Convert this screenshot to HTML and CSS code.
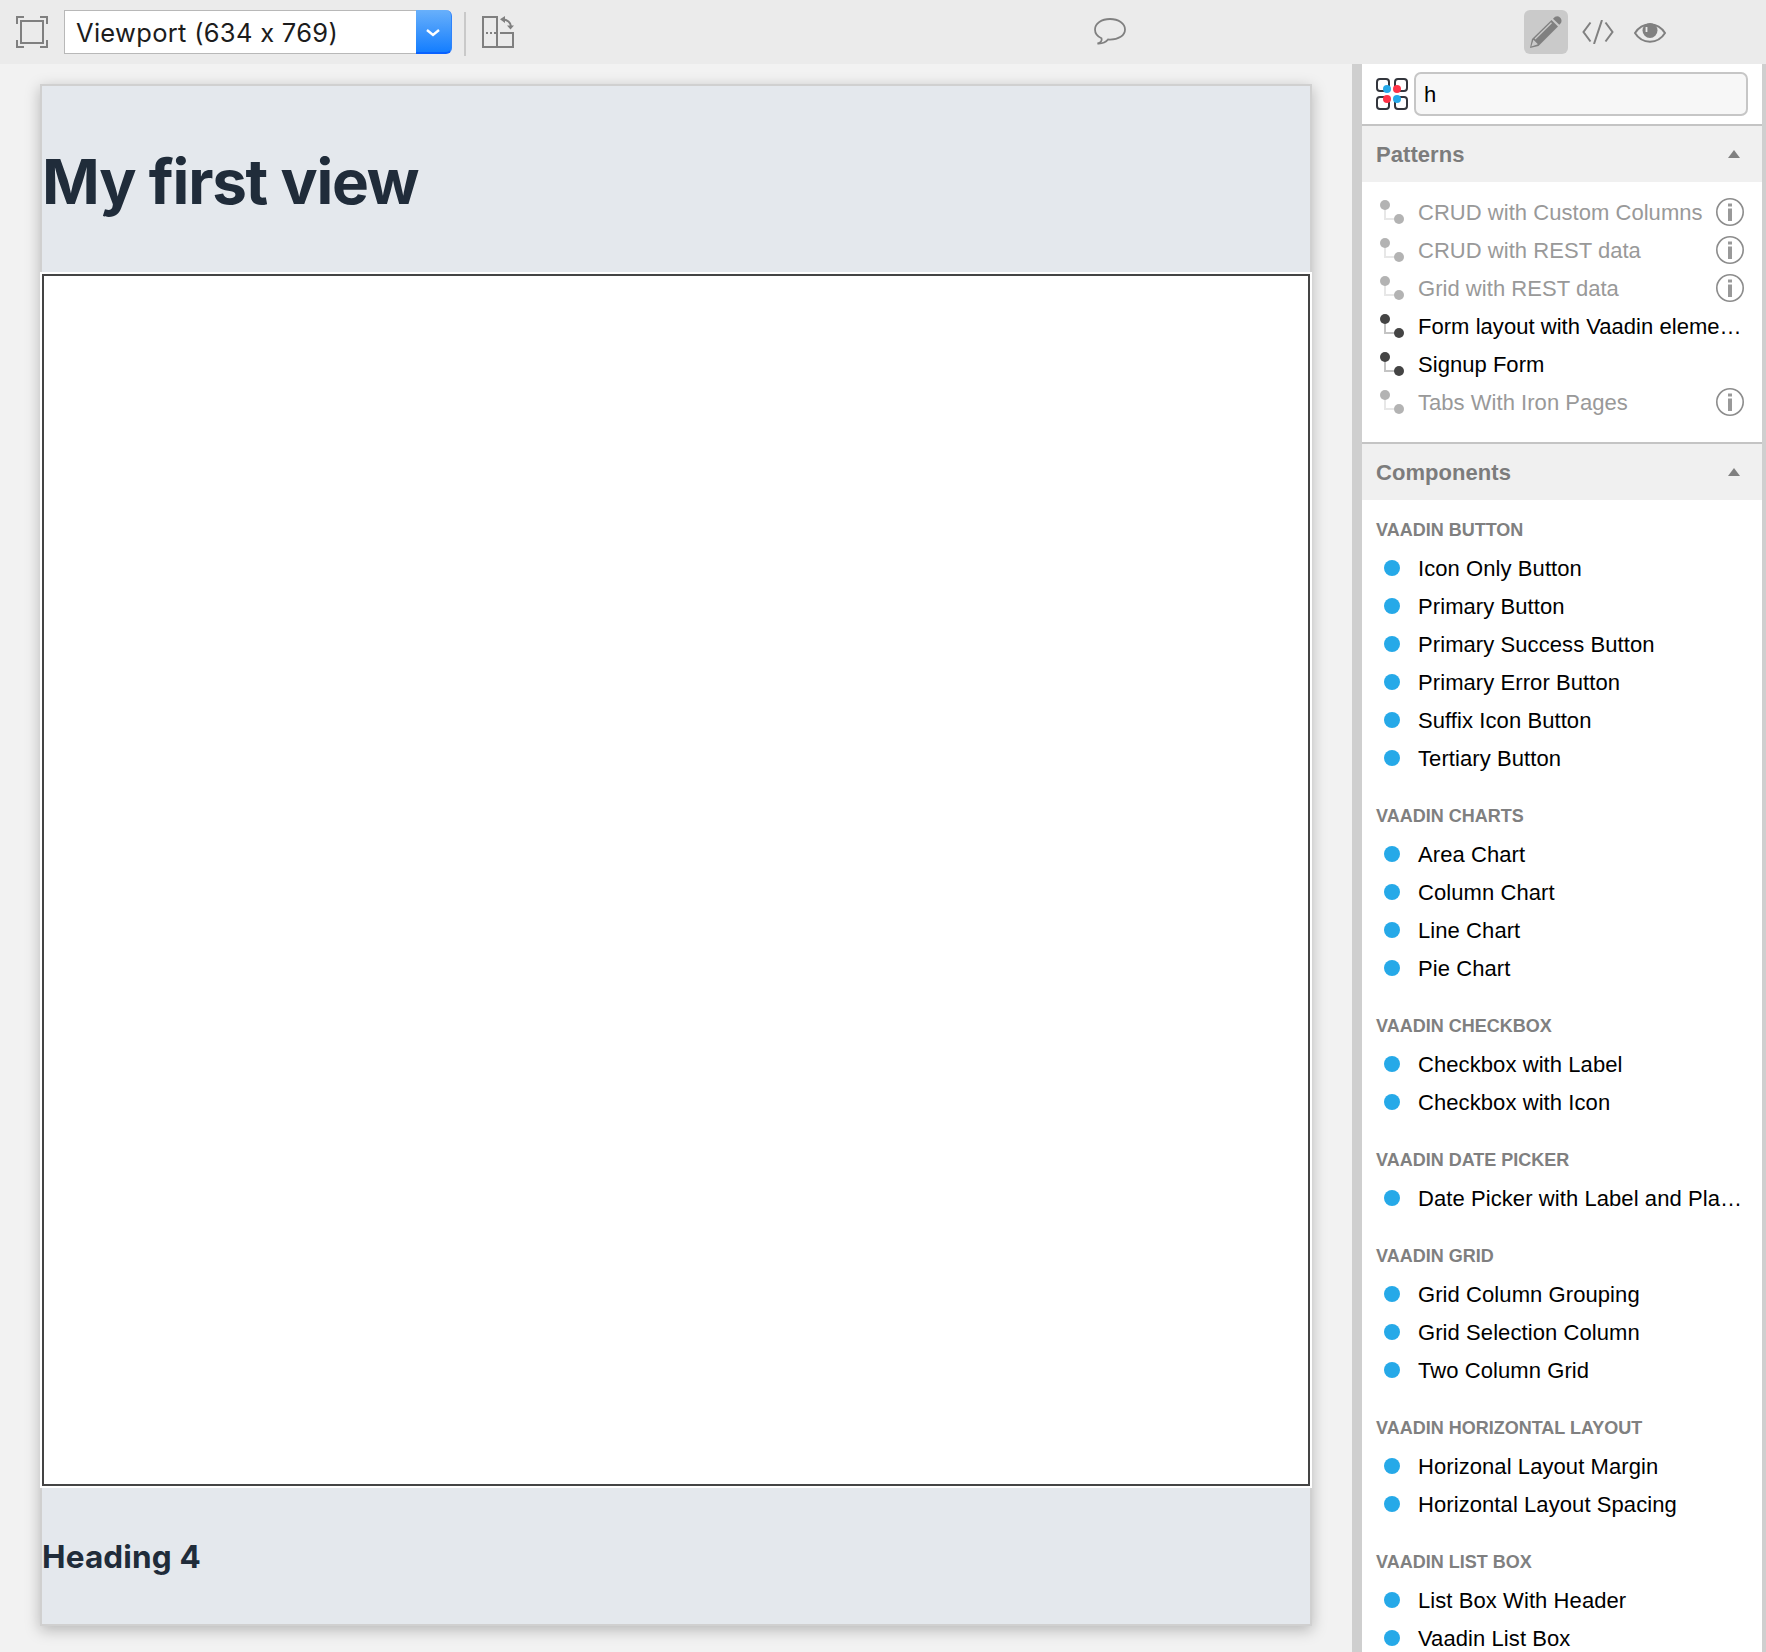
FILE: index.html
```html
<!DOCTYPE html>
<html lang="en">
<head>
<meta charset="utf-8">
<title>Designer</title>
<link rel="stylesheet" href="styles.css">
</head>
<body>
<svg class="defs" width="0" height="0">
  <symbol id="tree" viewBox="0 0 24 24"><path d="M5 6v13h13" fill="none" stroke="#c4c4c4" stroke-width="2"/><circle cx="5" cy="5" r="5" fill="#444"/><circle cx="19" cy="19" r="5" fill="#444"/></symbol>
  <symbol id="info" viewBox="0 0 28 28"><circle cx="14" cy="14" r="13.2" fill="none" stroke="#8c8c8c" stroke-width="1.6"/><path d="M12 5.5h4v3h-4zM12 10.5h4v12.5h-4z" fill="#999"/></symbol>
</svg>
<header class="toolbar">
  <svg class="icon-fit" width="32" height="32" viewBox="0 0 32 32" fill="none" stroke="#808080" stroke-width="2"><path d="M5 5h22v22H5zM1 8V1h7M24 1h7v7M31 24v7h-7M8 31H1v-7"/></svg>
  <div class="select">
    <span class="select-value">Viewport (634 x 769)</span>
    <span class="select-button"><svg width="16" height="10" viewBox="0 0 16 10" fill="none" stroke="#fff" stroke-width="2.4"><path d="M2 2l6 5 6-5"/></svg></span>
  </div>
  <span class="divider"></span>
  <svg class="icon-rotate" width="32" height="32" viewBox="0 0 32 32" fill="none" stroke="#808080" stroke-width="2"><path d="M1 1h14v30H1zM18 17h13v14H15"/><path d="M4 17h2M8 17h2M12 17h2"/><path d="M21 3.5c4 0 8 3 8 7"/><path d="M23 0v7l-5-3.800zM25 9.500h7l-3.500 4z" fill="#808080" stroke="none"/></svg>
  <svg class="icon-comment" width="32" height="28" viewBox="0 0 32 28" fill="none" stroke="#808080" stroke-width="1.8"><path d="M16 1C7.500 1 1 5.500 1 11.500c0 4 2.500 7 6.500 8.800.8 2.500-.7 4.200-4 5.200 4.500.3 8-.8 10.500-4l2 .1c8.500 0 15-4.100 15-10.100S24.500 1 16 1z"/></svg>
  <div class="modes">
    <span class="mode active"><svg width="34" height="34" viewBox="0 0 34 34"><path d="M1 33l2-9L22.500 5l6.500 6.500L9.500 31z" fill="#808080"/><path d="M24 3.800C26.500.5 29 .6 31 2.400c2.100 2 2.200 4.800-.7 7.300z" fill="#808080"/><path d="M6 24L22.500 7.800M3.300 30.500L4.700 26l3 3z" stroke="#cacaca" stroke-width="1.300" fill="#cacaca"/></svg></span>
    <svg width="32" height="24" viewBox="0 0 32 24" fill="none" stroke="#808080" stroke-width="2"><path d="M8.500 2.500L1.500 12l7 9.500M23.500 2.500l7 9.500-7 9.500M20 0l-8 24"/></svg>
    <svg class="icon-eye" width="32" height="20" viewBox="0 0 32 20"><path d="M1 10C8-1.500 24-1.500 31 10 24 21.500 8 21.500 1 10z" fill="none" stroke="#808080" stroke-width="2"/><circle cx="16" cy="7.500" r="7.500" fill="#808080"/><path d="M12.500 4v5" stroke="#ebebeb" stroke-width="1.800"/></svg>
  </div>
</header>
<div class="workspace">
  <main class="canvas">
    <div class="artboard">
      <div class="board-head"><h1>My first view</h1></div>
      <div class="content"></div>
      <div class="board-foot"><h4>Heading 4</h4></div>
    </div>
  </main>
  <aside class="panel">
    <div class="search">
      <svg width="32" height="32" viewBox="0 0 32 32"><g fill="none" stroke="#33363d" stroke-width="2"><rect x="1" y="1" width="12" height="12" rx="3"/><rect x="19" y="1" width="12" height="12" rx="3"/><rect x="1" y="19" width="12" height="12" rx="3"/><rect x="19" y="19" width="12" height="12" rx="3"/></g><g fill="#26a9e8"><circle cx="11" cy="11" r="4"/><circle cx="21" cy="21" r="4"/></g><g fill="#ff3347"><circle cx="21" cy="11" r="4"/><circle cx="11" cy="21" r="4"/></g></svg>
      <div class="field">h</div>
    </div>
    <h2 class="section"><span class="title">Patterns</span><span class="arrow"></span></h2>
    <ul class="patterns">
      <li class="off"><svg class="tree"><use href="#tree"/></svg><span class="label">CRUD with Custom Columns</span><svg class="info"><use href="#info"/></svg></li>
      <li class="off"><svg class="tree"><use href="#tree"/></svg><span class="label">CRUD with REST data</span><svg class="info"><use href="#info"/></svg></li>
      <li class="off"><svg class="tree"><use href="#tree"/></svg><span class="label">Grid with REST data</span><svg class="info"><use href="#info"/></svg></li>
      <li><svg class="tree"><use href="#tree"/></svg><span class="label">Form layout with Vaadin eleme…</span></li>
      <li><svg class="tree"><use href="#tree"/></svg><span class="label">Signup Form</span></li>
      <li class="off"><svg class="tree"><use href="#tree"/></svg><span class="label">Tabs With Iron Pages</span><svg class="info"><use href="#info"/></svg></li>
    </ul>
    <h2 class="section"><span class="title">Components</span><span class="arrow"></span></h2>
    <section class="group"><h3>VAADIN BUTTON</h3><ul><li><span>Icon Only Button</span></li><li><span>Primary Button</span></li><li><span>Primary Success Button</span></li><li><span>Primary Error Button</span></li><li><span>Suffix Icon Button</span></li><li><span>Tertiary Button</span></li></ul></section>
    <section class="group"><h3>VAADIN CHARTS</h3><ul><li><span>Area Chart</span></li><li><span>Column Chart</span></li><li><span>Line Chart</span></li><li><span>Pie Chart</span></li></ul></section>
    <section class="group"><h3>VAADIN CHECKBOX</h3><ul><li><span>Checkbox with Label</span></li><li><span>Checkbox with Icon</span></li></ul></section>
    <section class="group"><h3>VAADIN DATE PICKER</h3><ul><li><span>Date Picker with Label and Pla…</span></li></ul></section>
    <section class="group"><h3>VAADIN GRID</h3><ul><li><span>Grid Column Grouping</span></li><li><span>Grid Selection Column</span></li><li><span>Two Column Grid</span></li></ul></section>
    <section class="group"><h3>VAADIN HORIZONTAL LAYOUT</h3><ul><li><span>Horizonal Layout Margin</span></li><li><span>Horizontal Layout Spacing</span></li></ul></section>
    <section class="group"><h3>VAADIN LIST BOX</h3><ul><li><span>List Box With Header</span></li><li><span>Vaadin List Box</span></li></ul></section>
  </aside>
</div>
</body>
</html>
```
FILE: styles.css
```css
* { box-sizing: border-box; }
body { margin: 0; height: 1652px; overflow: hidden; display: flex; flex-direction: column; background: #f2f2f2; font-family: "Liberation Sans", Arial, sans-serif; color: #000; }
h1, h2, h3, h4, ul { margin: 0; padding: 0; }
ul { list-style: none; }
svg { display: block; flex: none; }
.defs { position: absolute; }

.toolbar { height: 64px; flex: none; display: flex; align-items: center; padding: 0 100px 0 16px; background: #ebebeb; }
.select { width: 388px; height: 44px; margin-left: 16px; display: flex; }
.select-value { flex: 1; border: 1px solid #b8b8b8; border-right: 0; background: #fff; padding: 1px 0 0 11px; font: 25.5px/42px Inter, sans-serif; font-feature-settings: "calt" 0; letter-spacing: .3px; color: #1c1c1c; white-space: nowrap; }
.select-button { width: 36px; display: flex; align-items: center; justify-content: center; padding: 3px 2px 0 0; border-radius: 0 6px 6px 0; background: linear-gradient(#68b0fb, #3f97fc 50%, #147eff); border-bottom: 2px solid #0a62ff; border-right: 1px solid #2f82fb; }
.divider { width: 2px; height: 44px; margin: 4px 16px 0 12px; background: #c9c9c9; }
.icon-comment { margin-left: 580px; }
.modes { margin-left: auto; display: flex; align-items: center; }
.mode { width: 44px; height: 44px; margin-right: 14px; border-radius: 6px; display: flex; align-items: center; justify-content: center; }
.mode.active { background: #cacaca; }
.icon-eye { margin: 2px 0 0 20px; }

.workspace { flex: 1; min-height: 0; display: flex; }
.canvas { flex: 1; padding: 20px 40px 0; }
.artboard { width: 1272px; height: 1542px; display: flex; flex-direction: column; border: 2px solid #d0d0d0; background: #e4e8ed; box-shadow: 0 4px 14px rgba(0, 0, 0, .25); color: #202c3a; font-family: Inter, sans-serif; }
.board-head { height: 186px; display: flex; align-items: center; }
h1 { font-size: 62px; line-height: 80px; font-weight: 700; letter-spacing: -1.25px; margin-top: 6px; white-space: nowrap; }
.content { height: 1216px; margin: 0 -2px; border: 2px solid #fff; outline: 2px solid #444; outline-offset: -4px; background: #fff; }
.board-foot { flex: 1; display: flex; align-items: center; }
h4 { font-size: 31.5px; font-weight: 700; letter-spacing: .15px; white-space: nowrap; }

.panel { width: 414px; overflow: hidden; background: #fff; border: solid #cfcfcf; border-width: 0 4px 0 10px; }
.search { height: 60px; display: flex; align-items: center; gap: 6px; padding: 0 14px; }
.field { width: 334px; height: 44px; border: 2px solid #c6c6c6; border-radius: 7px; background: #f7f7f7; padding-left: 8px; font-size: 22px; line-height: 41px; }
.section { height: 58px; display: flex; align-items: center; justify-content: space-between; padding: 0 22px 0 14px; border-top: 2px solid #c4c4c4; background: #f0f0f0; color: #7c7c7c; font-size: 22px; font-weight: 700; }
.title { padding-top: 2px; letter-spacing: .05px; }
.arrow { border: 6px solid transparent; border-top: 0; border-bottom: 8px solid #808080; }
.patterns { height: 260px; padding-top: 11px; }
.patterns li { height: 38px; display: flex; align-items: center; padding: 0 18px; }
.tree { width: 24px; height: 24px; margin-right: 14px; }
.info { width: 28px; height: 28px; }
.label { flex: 1; padding-top: 2px; font-size: 22px; letter-spacing: .04px; white-space: nowrap; }
.off .tree { opacity: .4; }
.off .label { color: #999; }
.group { padding-bottom: 9px; }
.group h3 { height: 49px; padding: 20px 0 0 14px; font-size: 18px; line-height: 20px; color: #808080; white-space: nowrap; }
.group li { height: 38px; display: flex; align-items: center; gap: 18px; padding-left: 22px; font-size: 22px; letter-spacing: .08px; white-space: nowrap; }
.group li span { padding-top: 2px; }
.group li::before { content: ""; width: 16px; height: 16px; border-radius: 50%; background: #26a9e8; }
```
